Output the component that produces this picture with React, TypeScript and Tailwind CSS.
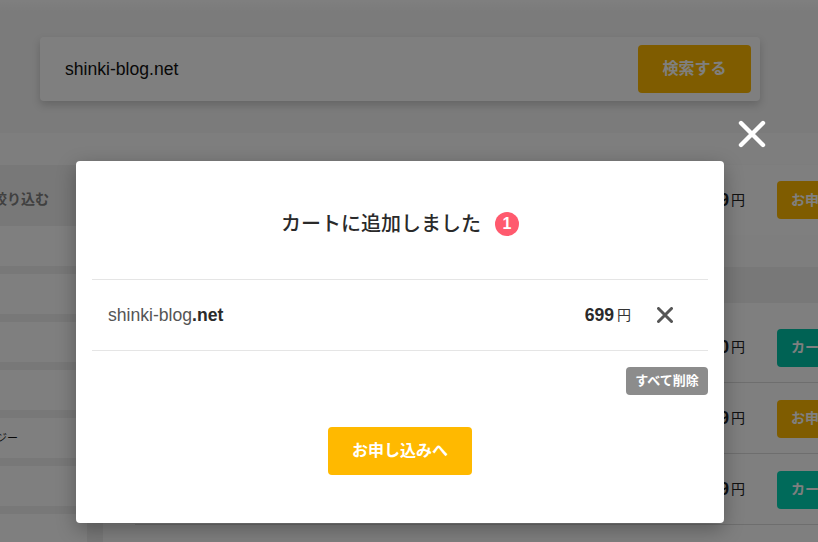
const sans = "font-['Liberation_Sans','Noto_Sans_CJK_JP',sans-serif]";

const results = [
  { price: '0', label: 'カート', color: 'bg-[#00c4a8]' },
  { price: '9', label: 'お申', color: 'bg-[#ffb900]' },
  { price: '9', label: 'カート', color: 'bg-[#00d4b4]' },
  { price: '9', label: 'カート', color: 'bg-[#00c4a8]' },
];

const filters = ['', '', '', '', 'ジー', '', ''];

function Price({ digit }: { digit: string }) {
  return (
    <>
      <span className="text-[17.6px] font-bold text-[#222]">{digit}</span>
      <span className="ml-[2px] text-[14px] text-[#222]">円</span>
    </>
  );
}

function ActionButton({ label, color }: { label: string; color: string }) {
  return (
    <span className={`ml-[32px] flex h-[38px] w-[41px] shrink-0 items-center overflow-hidden whitespace-nowrap rounded-l-[4px] pl-[14px] text-[14px] font-bold text-white ${color}`}>
      {label}
    </span>
  );
}

function Background() {
  return (
    <div className="h-[542px] w-[818px] overflow-hidden bg-[#f1f1f1]">
      <div className="h-[133px] bg-[linear-gradient(#ffffff,#f6f6f6_12px)] pl-10 pr-[58px] pt-[37px]">
        <div className="flex h-16 items-center justify-between rounded-[4px] bg-white pl-[25px] pr-[9px] shadow-[0_4px_8px_rgba(0,0,0,0.18)]">
          <span className="text-[17.6px] text-[#111]">shinki-blog.net</span>
          <span className="flex h-12 w-[113px] items-center justify-center rounded-[4px] bg-[#ffb900] text-[16px] font-bold text-white">
            検索する
          </span>
        </div>
      </div>
      <div className="h-8 bg-[#fcfcfc]" />
      <div className="flex h-[377px]">
        <div className="flex w-[87px] shrink-0 flex-col">
          <div className="flex h-[61px] shrink-0 items-center justify-end overflow-hidden whitespace-nowrap bg-[#f1f1f1] pr-[38px] pt-[7px] text-[14px] font-bold text-[#808080]">
            絞り込む
          </div>
          <div className="flex flex-col gap-2">
            {filters.map((text, i) => (
              <div key={i} className="flex h-10 shrink-0 items-center overflow-hidden bg-white text-[11px] text-[#111]">
                <span className="-ml-[4px] whitespace-nowrap">{text}</span>
              </div>
            ))}
          </div>
        </div>
        <div className="ml-4 flex flex-1 flex-col">
          <div className="flex h-[70px] shrink-0 items-center justify-end bg-white shadow-[0_2px_3px_rgba(0,0,0,0.15)]">
            <Price digit="9" />
            <ActionButton label="お申" color="bg-[#ffb900]" />
          </div>
          <div className="h-[32px] shrink-0 bg-[#fcfcfc]" />
          <div className="h-[36px] shrink-0" />
          <div className="flex-1 bg-white pl-8 pt-[9px]">
            {results.map((r, i) => (
              <div key={i} className="flex h-[71px] items-center justify-end border-b border-[#ddd] pt-[1px]">
                <Price digit={r.price} />
                <ActionButton label={r.label} color={r.color} />
              </div>
            ))}
          </div>
        </div>
      </div>
    </div>
  );
}

function CartModal() {
  return (
    <div className="relative h-[362px] w-[648px] rounded-[4px] bg-white px-4 shadow-[0_6px_20px_rgba(0,0,0,0.3)]">
      <button className="absolute right-[-42px] top-[-41px] text-white">
        <svg width="28" height="28" viewBox="0 0 28 28" fill="none" stroke="currentColor" strokeWidth="4.4" strokeLinecap="round">
          <path d="M3 3l22 22M25 3L3 25" />
        </svg>
      </button>
      <div className="flex h-[118px] items-center justify-center pt-[8px]">
        <h2 className="text-[20px] font-medium text-[#2a2a2a]">カートに追加しました</h2>
        <span className="ml-[14px] flex h-6 w-6 items-center justify-center rounded-full bg-[#ff5a6e] text-[16px] font-bold text-white">
          1
        </span>
      </div>
      <div className="flex h-[72px] items-center border-y border-[#e5e5e5] pl-4 pr-[35px]">
        <span className="text-[17.6px] text-[#555]">shinki-blog</span>
        <span className="text-[17.6px] font-bold text-[#2a2a2a]">.net</span>
        <span className="ml-auto text-[17.6px] font-bold text-[#2a2a2a]">699</span>
        <span className="ml-[3px] text-[14px] text-[#333]">円</span>
        <svg className="ml-[26px]" width="16" height="16" viewBox="0 0 16 16" fill="none" stroke="#555" strokeWidth="3" strokeLinecap="round">
          <path d="M1.5 1.5l13 13M14.5 1.5l-13 13" />
        </svg>
      </div>
      <div className="flex justify-end pt-4">
        <span className="flex h-7 w-[82px] items-center justify-center whitespace-nowrap rounded-[4px] bg-[#8c8c8c] text-[13px] font-bold text-white">
          すべて削除
        </span>
      </div>
      <div className="flex justify-center pt-8">
        <span className="flex h-12 w-36 items-center justify-center rounded-[4px] bg-[#ffb900] text-[16px] font-bold text-white">
          お申し込みへ
        </span>
      </div>
    </div>
  );
}

export default function App() {
  return (
    <div className={`relative h-[542px] w-[818px] overflow-hidden ${sans}`}>
      <Background />
      <div className="absolute inset-0 flex justify-center bg-black/50 pr-[18px] pt-[161px]">
        <CartModal />
      </div>
    </div>
  );
}
